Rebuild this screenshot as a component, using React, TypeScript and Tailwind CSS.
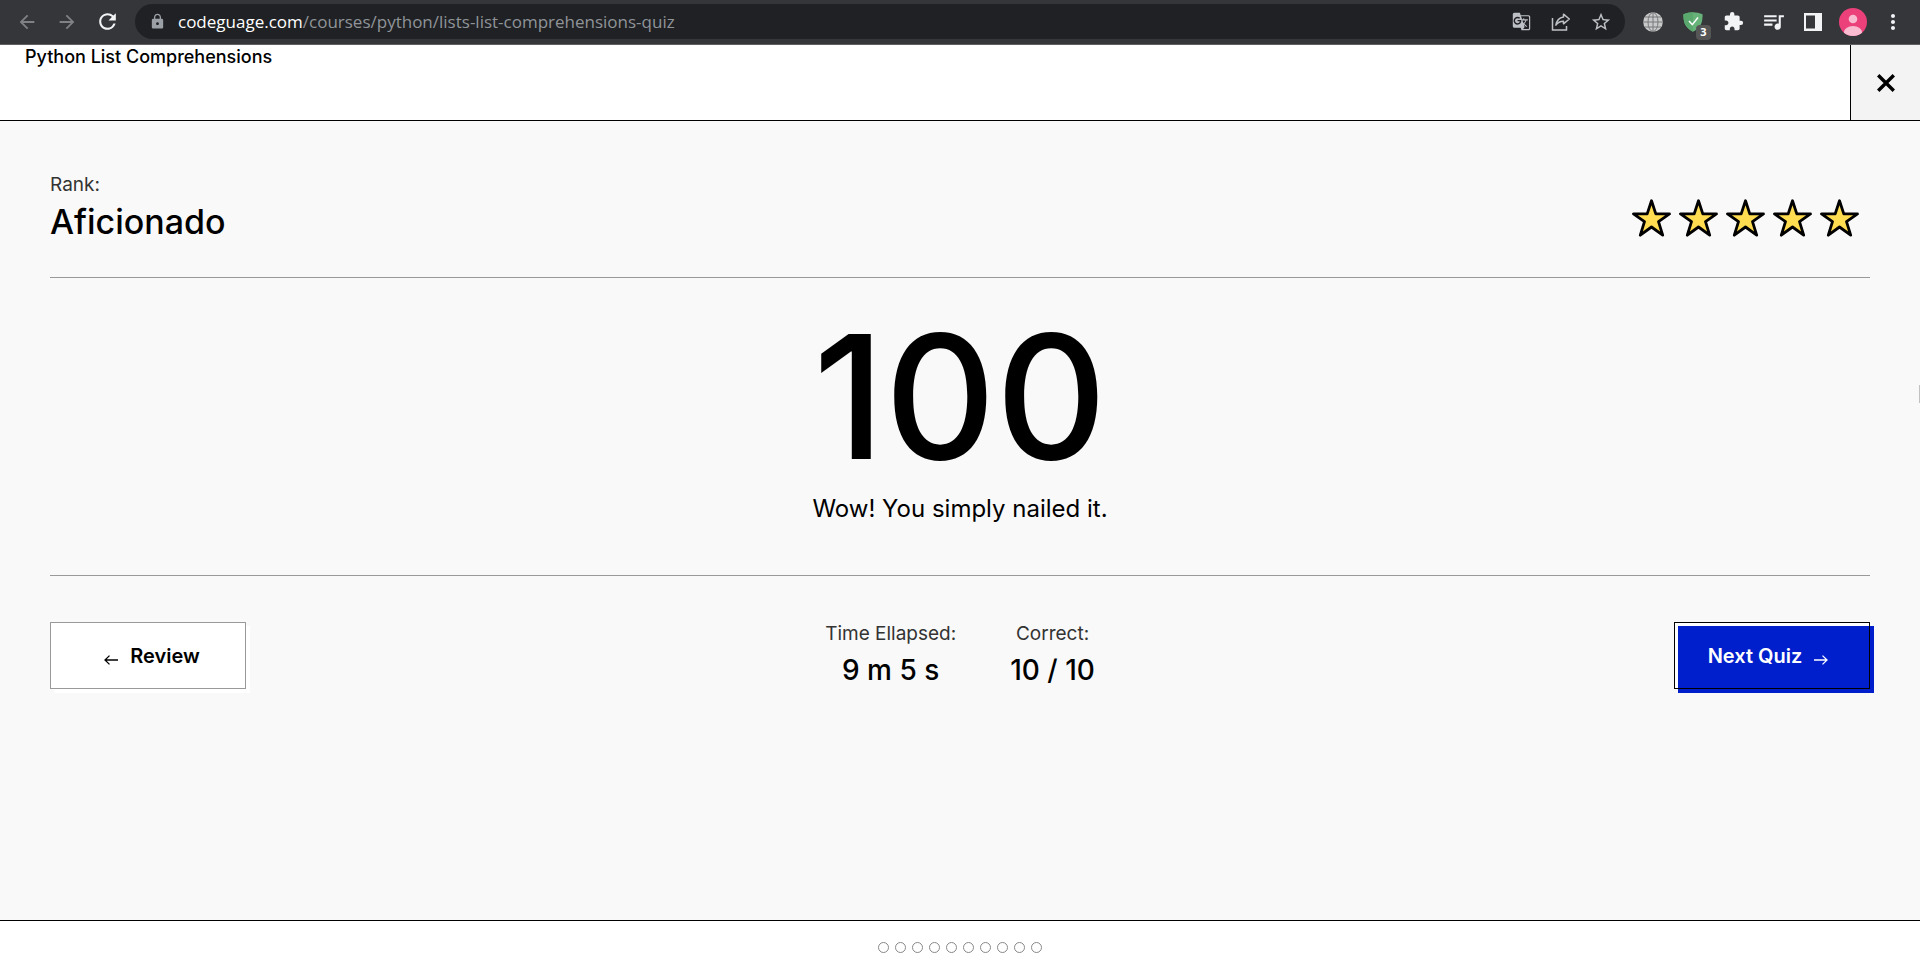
import type { ReactNode } from "react";
import {
  MdArrowBack,
  MdArrowForward,
  MdExtension,
  MdGTranslate,
  MdLock,
  MdMoreVert,
  MdQueueMusic,
  MdRefresh,
  MdStarBorder,
} from "react-icons/md";

function ToolButton({ label, children }: { label: string; children: ReactNode }) {
  return (
    <button
      type="button"
      aria-label={label}
      className="flex h-9 w-10 shrink-0 items-center justify-center"
    >
      {children}
    </button>
  );
}

function ShareIcon() {
  return (
    <svg width="20" height="20" viewBox="0 0 20 20" fill="none" stroke="currentColor" strokeWidth="1.5">
      <path d="M1.5 6v12h14v-4" />
      <path d="M12.5 2.2 18.3 7l-5.8 4.8V9.3c-3.400 0-5.800 1.200-7.600 3.900.6-4.300 3.200-7.600 7.600-8.300z" strokeLinejoin="round" />
    </svg>
  );
}

function GlobeIcon() {
  return (
    <svg width="20" height="20" viewBox="0 0 20 20" fill="none">
      <circle cx="10" cy="10" r="9.800" fill="#c9c9c9" />
      <g stroke="#77787a" strokeWidth="1">
        <path d="M10 0v20M0 10h20M2 5h16M2 15h16" />
        <ellipse cx="10" cy="10" rx="5" ry="9.500" />
      </g>
    </svg>
  );
}

function ShieldIcon() {
  return (
    <svg width="20" height="20" viewBox="0 0 20 20" fill="none">
      <path d="M10 .3c3 0 6.800.8 9.600 2 0 7-.9 13-9.600 17.500C1.300 15.300.4 9.300.4 2.300 3.200 1.100 7 .3 10 .3z" fill="#67b279" />
      <path d="M10 .3C7 .3 3.200 1.100.4 2.300c0 7 .9 13 9.600 17.500z" fill="#5aa86d" />
      <path d="m6 9 3.300 3.600L15 5.500" stroke="#fff" strokeWidth="1.500" />
    </svg>
  );
}

function PanelIcon() {
  return (
    <svg width="18" height="18" viewBox="0 0 18 18" fill="currentColor">
      <path fillRule="evenodd" d="M0 0h18v18H0zM2 2.500v13h9v-13z" />
    </svg>
  );
}

function AvatarIcon() {
  return (
    <svg width="28" height="28" viewBox="0 0 28 28">
      <defs>
        <clipPath id="avatar-disc">
          <circle cx="14" cy="14" r="14" />
        </clipPath>
      </defs>
      <circle cx="14" cy="14" r="14" fill="#ec407a" />
      <g clipPath="url(#avatar-disc)" fill="#f8bbd0">
        <circle cx="14" cy="11" r="4.300" />
        <ellipse cx="14" cy="24.500" rx="9.200" ry="6.500" />
      </g>
    </svg>
  );
}

function BrowserBar() {
  return (
    <div className="flex h-[45px] shrink-0 items-start border-b border-[#5f5f62] bg-[#35363a] px-[7px] pt-1">
      <div className="flex h-[35px] items-center text-[#808185]">
        <ToolButton label="Back">
          <MdArrowBack size={22} />
        </ToolButton>
        <ToolButton label="Forward">
          <MdArrowForward size={22} />
        </ToolButton>
        <span className="flex text-[#f1f3f4]">
          <ToolButton label="Reload">
            <MdRefresh size={25} />
          </ToolButton>
        </span>
      </div>
      <div className="ml-2 flex h-[35px] min-w-0 flex-1 items-center rounded-full bg-[#202124] pr-1 pl-3 text-[#bdc1c6]">
        <MdLock size={17} className="mx-0.5 shrink-0 text-[#9aa0a6]" />
        <div
          role="textbox"
          aria-label="Address"
          className="ml-2.5 min-w-0 flex-1 truncate font-['Open_Sans',sans-serif] text-[17px] leading-6 text-[#8f9499]"
        >
          <span className="text-white">codeguage.com</span>/courses/python/lists-list-comprehensions-quiz
        </div>
        <ToolButton label="Translate">
          <MdGTranslate size={19} />
        </ToolButton>
        <ToolButton label="Share">
          <ShareIcon />
        </ToolButton>
        <ToolButton label="Bookmark">
          <MdStarBorder size={22} />
        </ToolButton>
      </div>
      <div className="ml-2 flex h-[35px] items-center text-[#f1f3f4]">
        <ToolButton label="Site language">
          <GlobeIcon />
        </ToolButton>
        <div className="relative flex">
          <ToolButton label="Ad blocker">
            <ShieldIcon />
          </ToolButton>
          <span className="absolute right-0.5 bottom-0 flex h-[15px] w-[15px] items-center justify-center rounded-sm bg-[#565656] font-['Noto_Sans',sans-serif] text-[11px] font-bold text-white">
            3
          </span>
        </div>
        <ToolButton label="Extensions">
          <MdExtension size={21} />
        </ToolButton>
        <ToolButton label="Media">
          <MdQueueMusic size={25} />
        </ToolButton>
        <ToolButton label="Side panel">
          <PanelIcon />
        </ToolButton>
        <ToolButton label="Profile">
          <AvatarIcon />
        </ToolButton>
        <ToolButton label="Menu">
          <MdMoreVert size={24} />
        </ToolButton>
      </div>
    </div>
  );
}

function Star() {
  return (
    <svg width="39" height="38" viewBox="0 0 39 38">
      <path
        d="m19.500 1.800 4.300 13.100h13.700L26.500 22.700l4.200 13.500-11.200-8.200-11.200 8.200 4.200-13.500L1.500 14.900h13.700z"
        fill="#ffdc50"
        stroke="#000"
        strokeWidth="2.800"
        strokeLinejoin="round"
      />
    </svg>
  );
}

function Arrow({ left = false }: { left?: boolean }) {
  return (
    <svg width="14" height="10" viewBox="0 0 14 10" fill="none" stroke="currentColor" strokeWidth="1.300">
      {left ? <path d="M14 5H1M5.500.6 1 5l4.500 4.400" /> : <path d="M0 5h13M8.500.6 13 5 8.500 9.400" />}
    </svg>
  );
}

function Stat({ label, value }: { label: string; value: string }) {
  return (
    <div className="text-center">
      <dt className="text-[19px] leading-6 text-[#333]">{label}</dt>
      <dd className="mt-1 text-[28px] leading-10 font-medium">{value}</dd>
    </div>
  );
}

const QUESTIONS = Array.from({ length: 10 }, (_, i) => i + 1);

export default function App() {
  return (
    <div className="flex min-h-screen flex-col bg-[#f9f9f9] font-[Inter,sans-serif] text-black">
      <BrowserBar />

      <header className="flex h-[76px] shrink-0 justify-between border-b border-black bg-white">
        <h1 className="pl-[25px] text-lg leading-6 font-medium">Python List Comprehensions</h1>
        <button
          type="button"
          aria-label="Close"
          className="flex w-[70px] items-center justify-center border-l border-black bg-[#f3f3f3]"
        >
          <svg width="18" height="18" viewBox="0 0 18 18" stroke="currentColor" strokeWidth="3.400">
            <path d="m1.200 1.200 15.600 15.600M16.800 1.200 1.200 16.800" />
          </svg>
        </button>
      </header>

      <main className="relative flex-1 px-[50px] pt-[50px]">
        <section className="flex items-center justify-between border-b border-[#999] pb-8">
          <div>
            <p className="text-[19px] leading-7 text-[#333]">Rank:</p>
            <p className="text-[34px] leading-[46px] font-medium">Aficionado</p>
          </div>
          <div role="img" aria-label="5 stars" className="mr-[11px] flex gap-2 pt-5">
            <Star />
            <Star />
            <Star />
            <Star />
            <Star />
          </div>
        </section>

        <section className="border-b border-[#999] pt-[38px] pb-12 text-center">
          <p className="text-[172px] leading-[160px] font-medium">100</p>
          <p className="mt-[15px] text-2xl leading-9">Wow! You simply nailed it.</p>
        </section>

        <section className="flex items-start justify-between pt-[46px]">
          <button
            type="button"
            className="flex h-[67px] w-[196px] items-center justify-center gap-3 border border-[#999] bg-white pl-2 text-xl font-semibold shadow-[4px_4px_0_#fff]"
          >
            <span className="pt-2">
              <Arrow left />
            </span>
            Review
          </button>
          <dl className="flex gap-[54px]">
            <Stat label="Time Ellapsed:" value="9 m 5 s" />
            <Stat label="Correct:" value="10 / 10" />
          </dl>
          <button
            type="button"
            className="relative h-[67px] w-[196px] border border-black bg-white text-xl font-semibold text-white"
          >
            <span className="absolute top-[3px] left-[3px] h-[67px] w-[196px] bg-[#001fcc]" />
            <span className="absolute -inset-px border border-black" />
            <span className="relative flex items-center justify-center gap-3 pr-2">
              Next Quiz
              <span className="pt-2">
                <Arrow />
              </span>
            </span>
          </button>
        </section>
        <div className="absolute top-[264px] right-0 h-[18px] w-px bg-[#c1c1c1]" />
      </main>

      <footer className="flex h-14 shrink-0 justify-center gap-1.5 border-t border-black bg-white pt-[21px]">
        {QUESTIONS.map((n) => (
          <span key={n} className="h-[11px] w-[11px] rounded-full border border-[#888]" />
        ))}
      </footer>
    </div>
  );
}
